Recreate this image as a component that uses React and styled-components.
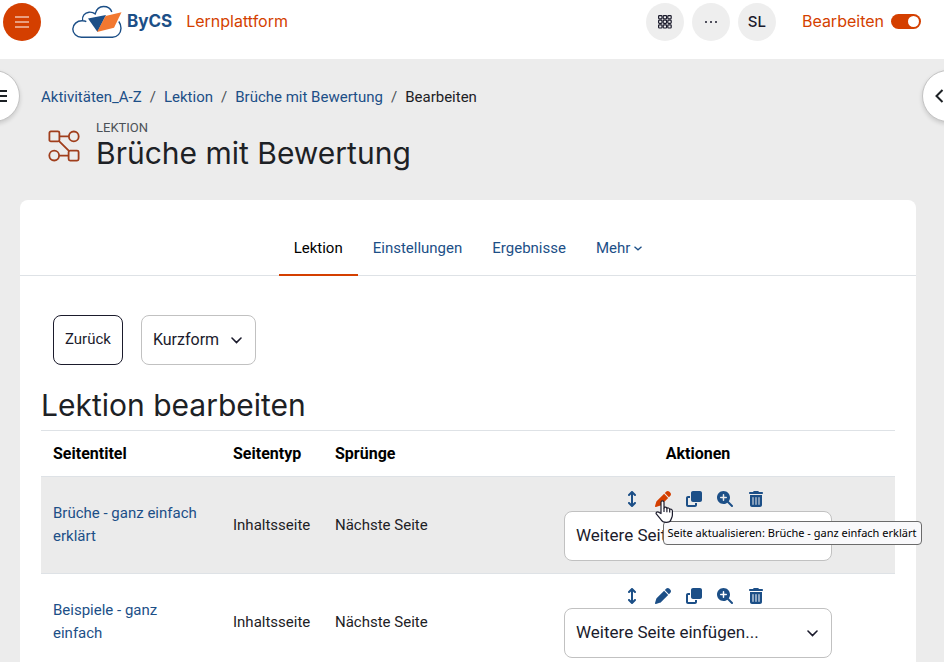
import React, { useState } from 'react';
import styled, { ThemeProvider, createGlobalStyle } from 'styled-components';
import {
  FaArrowsUpDown,
  FaPen,
  FaClone,
  FaMagnifyingGlassPlus,
  FaTrashCan,
} from 'react-icons/fa6';

const theme = {
  orange: '#d43f00',
  blue: '#1c4f87',
  dark: '#1b1b2c',
  text: '#1d2125',
  muted: '#ebebeb',
  border: '#dee2e6',
  bodyFont: 'Roboto, "Liberation Sans", sans-serif',
  headingFont: 'Inter, "Liberation Sans", sans-serif',
};

const GlobalStyle = createGlobalStyle`
  *, *::before, *::after {
    box-sizing: border-box;
  }

  html {
    scrollbar-width: none;
  }

  body {
    margin: 0;
    overflow-x: hidden;
    background: #ececec;
    color: ${theme.text};
    font-family: ${theme.bodyFont};
    font-size: 15px;
    line-height: 23px;
  }

  a {
    color: ${theme.blue};
    text-decoration: none;
  }
`;

// Header

const Header = styled.header`
  display: flex;
  align-items: center;
  height: 59px;
  padding: 0 23px 16px 3px;
  background: #fff;
`;

const MenuButton = styled.button`
  display: flex;
  align-items: center;
  justify-content: center;
  width: 38px;
  height: 38px;
  padding: 0;
  border: none;
  border-radius: 50%;
  background: ${props => props.theme.orange};
  color: #fff;
`;

const Brand = styled.a`
  display: flex;
  align-items: center;
  gap: 5px;
  margin-left: 31px;
  color: ${props => props.theme.blue};
  font-family: ${props => props.theme.headingFont};
  font-size: 17px;
  font-weight: 700;
`;

const Platform = styled.a`
  margin-left: 14px;
  color: ${props => props.theme.orange};
  font-family: ${props => props.theme.headingFont};
  font-size: 16px;
`;

const Spacer = styled.div`
  margin: 0 auto;
`;

const RoundButtons = styled.div`
  display: flex;
  gap: 8px;
`;

const RoundButton = styled.button`
  display: flex;
  align-items: center;
  justify-content: center;
  width: 38px;
  height: 38px;
  padding: 0;
  border: none;
  border-radius: 50%;
  background: #eee;
  color: ${props => props.theme.dark};
  font-family: ${props => props.theme.headingFont};
  font-size: 15px;
  font-weight: 500;
`;

const EditMode = styled.label`
  display: flex;
  align-items: center;
  gap: 7px;
  margin-left: 26px;
  color: ${props => props.theme.orange};
  font-family: ${props => props.theme.headingFont};
  font-size: 16px;
`;

const Switch = styled.input`
  display: flex;
  align-items: center;
  justify-content: ${props => (props.checked ? 'flex-end' : 'flex-start')};
  appearance: none;
  width: 30px;
  height: 15px;
  margin: 0;
  padding: 0 2px;
  border-radius: 8px;
  background: ${props => (props.checked ? props.theme.orange : '#8f959e')};

  &::before {
    content: '';
    width: 11px;
    height: 11px;
    border-radius: 50%;
    background: #fff;
  }
`;

// Drawer toggles, floating over the page edges

const DrawerToggle = styled.button`
  position: absolute;
  top: 70px;
  ${props => props.$side}: ${props => (props.$side === 'left' ? '-32px' : '-30px')};
  display: flex;
  align-items: center;
  justify-content: ${props => (props.$side === 'left' ? 'flex-end' : 'flex-start')};
  width: 52px;
  height: 52px;
  padding: 0 12px;
  border: 1px solid #c4c4c4;
  border-radius: 50%;
  background: #fff;
  box-shadow: 0 2px 4px rgba(0, 0, 0, 0.15);
  color: ${props => props.theme.text};
`;

// Page head

const Page = styled.main`
  padding: 27px 28px 0 20px;
`;

const Breadcrumb = styled.nav`
  display: flex;
  padding: 0 21px;
`;

const Crumb = styled.span`
  & + &::before {
    content: '/';
    padding: 0 8px;
    color: #4b5157;
  }
`;

const PageHead = styled.div`
  display: flex;
  align-items: center;
  gap: 16px;
  padding: 11px 28px 29px;
`;

const Kind = styled.div`
  color: #4b5157;
  font-size: 13px;
  line-height: 15px;
`;

const Title = styled.h1`
  margin: 0;
  font-family: ${props => props.theme.headingFont};
  font-size: 30px;
  font-weight: 400;
  line-height: 36px;
`;

// Card

const Card = styled.section`
  border-radius: 8px 8px 0 0;
  background: #fff;
`;

const Tabs = styled.nav`
  display: flex;
  justify-content: center;
  border-bottom: 1px solid ${props => props.theme.border};
`;

const Tab = styled.a`
  display: flex;
  align-items: center;
  gap: 4px;
  height: 76px;
  margin-bottom: -1px;
  padding: 22px 15px 0;
  border-bottom: 2px solid ${props => (props.$active ? props.theme.orange : 'transparent')};
  color: ${props => (props.$active ? '#000' : props.theme.blue)};
`;

const Content = styled.div`
  padding: 39px 21px 0;
`;

const Controls = styled.div`
  display: flex;
  gap: 18px;
  padding: 0 12px;
`;

const BackButton = styled.button`
  height: 50px;
  padding: 0 11px 2px;
  border: 1px solid ${props => props.theme.dark};
  border-radius: 8px;
  background: #fff;
  color: ${props => props.theme.dark};
  font-family: inherit;
  font-size: 15px;
`;

const SelectWrapper = styled.div`
  display: grid;
  align-items: center;
  justify-items: end;
  width: ${props => (props.$small ? '115px' : '268px')};
  margin: 0 auto;
  font-size: ${props => (props.$small ? '16px' : '17px')};

  & > * {
    grid-area: 1 / 1;
  }

  svg {
    margin-right: 14px;
    pointer-events: none;
  }
`;

const Select = styled.select`
  appearance: none;
  width: 100%;
  height: 50px;
  padding: 0 30px 2px 11px;
  border: 1px solid #c1c1c1;
  border-radius: 8px;
  background: #fff;
  color: ${props => props.theme.dark};
  font-family: inherit;
  font-size: inherit;
`;

const Heading = styled.h2`
  margin: 22px 0 6px;
  font-family: ${props => props.theme.headingFont};
  font-size: 30px;
  font-weight: 400;
  line-height: 37px;
`;

const Table = styled.table`
  width: 100%;
  border-collapse: collapse;
  border-top: 1px solid ${props => props.theme.border};
  table-layout: fixed;
`;

const HeadCell = styled.th`
  width: ${props => props.$width};
  height: 46px;
  padding: 0 12px;
  color: #000;
  font-size: 16px;
  font-weight: 700;
  text-align: ${props => props.$align || 'left'};
`;

const Row = styled.tr`
  height: 97px;
  border-top: 1px solid ${props => props.theme.border};
  background: ${props => (props.$striped ? props.theme.muted : '#fff')};
`;

const Cell = styled.td`
  padding: 12px;
`;

const Actions = styled.div`
  display: flex;
  justify-content: center;
  height: 22px;
`;

const Action = styled.button`
  position: relative;
  display: flex;
  align-items: center;
  justify-content: center;
  width: 23px;
  height: 20px;
  margin-right: 8px;
  padding: 0;
  border: none;
  background: none;
  color: ${props => (props.$hovered ? props.theme.orange : props.theme.blue)};
  font-size: 16px;
`;

const Tooltip = styled.span`
  position: absolute;
  top: 32px;
  left: 11px;
  z-index: 1;
  padding: 2px 5px 2px 4px;
  border: 1px solid #6b6b6b;
  border-radius: 4px;
  background: #f9f9fb;
  color: #000;
  font-family: "Noto Sans", "Open Sans", sans-serif;
  font-size: 11px;
  line-height: 18px;
  white-space: nowrap;
`;

const Pointer = styled.svg`
  position: absolute;
  top: 11px;
  left: 3px;
  z-index: 2;
`;

const Bars = ({ width, height, stroke }) => (
  <svg width={width} height={height} viewBox={`0 0 ${width} ${height}`} stroke="currentColor" strokeWidth={stroke}>
    <path d={`M0 1H${width}M0 ${height / 2}H${width}M0 ${height - 1}H${width}`} />
  </svg>
);

const Chevron = () => (
  <svg width="11" height="7" viewBox="0 0 11 7" fill="none" stroke="#1b1b2c" strokeWidth="1.6" strokeLinecap="round">
    <path d="M1 1l4.5 4.5L10 1" />
  </svg>
);

const Logo = () => (
  <svg width="50" height="34" viewBox="0 0 50 34" fill="none">
    <path
      d="M46.8 16.500C48.300 18.500 49 20.700 49 23.200C48.900 28.300 45.300 32.200 40.500 32.200H9.500C4.600 32.200 .8 28.500 .8 24C.8 19.500 5 15.500 10.600 15.800C9.700 11 12.800 7.600 17 7.200C19.500 7 21.700 7.700 23.200 8.900C24.400 4.200 27.500 1.500 31.500 1.500C35.500 1.500 38.600 3.500 39.800 7M10.600 15.800C12 15.900 13.200 16.100 14.300 16.700"
      stroke="#1c4f87"
      strokeWidth="1.4"
    />
    <path d="M16 13.500L34 10L25.500 27z" fill="#1c4f87" />
    <path d="M33.500 11L49.500 7.300L42 22.800L25 27z" fill="#f27830" />
  </svg>
);

const GridIcon = () => (
  <svg width="14" height="14" viewBox="0 0 14 14" fill="none" stroke="currentColor" strokeWidth="1.2">
    {[0.6, 5.2, 9.8].map(y => [0.6, 5.2, 9.8].map(x => (
      <rect key={`${x}-${y}`} x={x} y={y} width="3.4" height="3.2" rx=".8" />
    )))}
  </svg>
);

const LessonIcon = () => (
  <svg width="32" height="32" viewBox="0 0 32 32" fill="none" stroke="#a03e1c" strokeWidth="1.8">
    <rect x="1.4" y="1.4" width="10" height="10" rx="1.5" />
    <circle cx="25.8" cy="6.4" r="4.9" />
    <circle cx="6.2" cy="25.6" r="4.9" />
    <rect x="20.6" y="20.6" width="10" height="10" rx="1.5" />
    <path d="M11.4 6.4h9.5M11.1 25.6h9.5M10.8 10.8l10.4 10.4" />
  </svg>
);

const HandPointer = () => (
  <Pointer width="19" height="23" viewBox="0 0 19 23" fill="#fff" stroke="#1b1b2c" strokeWidth="1.2" strokeLinejoin="round">
    <path d="M6 13.500V2.300C6 .3 9 .3 9 2.300V8C9.300 6.800 11.800 6.900 11.900 8.500C12.300 7.600 14.600 7.800 14.700 9.500C15.300 8.700 17.400 9.200 17.400 11V15C17.400 17.500 16 18.800 15.800 20C15.300 21.800 13.500 22.300 11.300 22.300C8.600 22.300 7 21.500 6 19.700L1.500 14.200C.3 12.600 2.200 11.100 3.700 12.200z" />
    <path d="M9 8v4M11.9 8.500v3.800M14.7 9.500v3" />
  </Pointer>
);

const tabs = ['Lektion', 'Einstellungen', 'Ergebnisse', 'Mehr'];

const pages = [
  { title: 'Brüche - ganz einfach erklärt', hovered: true },
  { title: 'Beispiele - ganz einfach' },
];

const PageRow = ({ page, striped }) => (
  <Row $striped={striped}>
    <Cell><a href="#page">{page.title}</a></Cell>
    <Cell>Inhaltsseite</Cell>
    <Cell>Nächste Seite</Cell>
    <Cell>
      <Actions>
        <Action aria-label="Verschieben"><FaArrowsUpDown /></Action>
        <Action aria-label="Aktualisieren" $hovered={page.hovered}>
          <FaPen />
          {page.hovered && (
            <>
              <Tooltip role="tooltip">Seite aktualisieren: {page.title}</Tooltip>
              <HandPointer />
            </>
          )}
        </Action>
        <Action aria-label="Duplizieren"><FaClone /></Action>
        <Action aria-label="Vorschau"><FaMagnifyingGlassPlus /></Action>
        <Action aria-label="Löschen"><FaTrashCan /></Action>
      </Actions>
      <SelectWrapper>
        <Select aria-label="Weitere Seite einfügen">
          <option>Weitere Seite einfügen...</option>
        </Select>
        <Chevron />
      </SelectWrapper>
    </Cell>
  </Row>
);

const App = () => {
  const [editing, setEditing] = useState(true);

  return (
    <ThemeProvider theme={theme}>
      <GlobalStyle />

      <Header>
        <MenuButton aria-label="Menü"><Bars width={14} height={12} stroke={1} /></MenuButton>
        <Brand href="#home"><Logo />ByCS</Brand>
        <Platform href="#home">Lernplattform</Platform>

        <Spacer />

        <RoundButtons>
          <RoundButton aria-label="Apps"><GridIcon /></RoundButton>
          <RoundButton aria-label="Mehr">
            <svg width="12" height="2" viewBox="0 0 12 2" fill="currentColor">
              <circle cx="1" cy="1" r="1" />
              <circle cx="6" cy="1" r="1" />
              <circle cx="11" cy="1" r="1" />
            </svg>
          </RoundButton>
          <RoundButton>SL</RoundButton>
        </RoundButtons>

        <EditMode>
          Bearbeiten
          <Switch type="checkbox" checked={editing} onChange={() => setEditing(!editing)} />
        </EditMode>
      </Header>

      <DrawerToggle $side="left" aria-label="Kursindex öffnen"><Bars width={12} height={12} stroke={2} /></DrawerToggle>
      <DrawerToggle $side="right" aria-label="Blockleiste öffnen">
        <svg width="9" height="14" viewBox="0 0 9 14" fill="none" stroke="currentColor" strokeWidth="2">
          <path d="M7.5 1L1.5 7l6 6" />
        </svg>
      </DrawerToggle>

      <Page>
        <Breadcrumb aria-label="Navigationspfad">
          <Crumb><a href="#course">Aktivitäten_A-Z</a></Crumb>
          <Crumb><a href="#section">Lektion</a></Crumb>
          <Crumb><a href="#lesson">Brüche mit Bewertung</a></Crumb>
          <Crumb>Bearbeiten</Crumb>
        </Breadcrumb>

        <PageHead>
          <LessonIcon />
          <div>
            <Kind>LEKTION</Kind>
            <Title>Brüche mit Bewertung</Title>
          </div>
        </PageHead>

        <Card>
          <Tabs>
            {tabs.map((tab, index) => (
              <Tab key={tab} href={`#${tab}`} $active={index === 0}>
                {tab}
                {tab === 'Mehr' && (
                  <svg width="8" height="5" viewBox="0 0 8 5" fill="none" stroke="currentColor" strokeWidth="1.3">
                    <path d="M.5 .8l3.500 3l3.500-3" />
                  </svg>
                )}
              </Tab>
            ))}
          </Tabs>

          <Content>
            <Controls>
              <BackButton>Zurück</BackButton>
              <div>
                <SelectWrapper $small>
                  <Select aria-label="Ansicht">
                    <option>Kurzform</option>
                  </Select>
                  <Chevron />
                </SelectWrapper>
              </div>
            </Controls>

            <Heading>Lektion bearbeiten</Heading>

            <Table>
              <thead>
                <tr>
                  <HeadCell $width="180px">Seitentitel</HeadCell>
                  <HeadCell $width="102px">Seitentyp</HeadCell>
                  <HeadCell $width="178px">Sprünge</HeadCell>
                  <HeadCell $align="center">Aktionen</HeadCell>
                </tr>
              </thead>
              <tbody>
                {pages.map((page, index) => (
                  <PageRow key={page.title} page={page} striped={index % 2 === 0} />
                ))}
              </tbody>
            </Table>
          </Content>
        </Card>
      </Page>
    </ThemeProvider>
  );
};

export default App;
